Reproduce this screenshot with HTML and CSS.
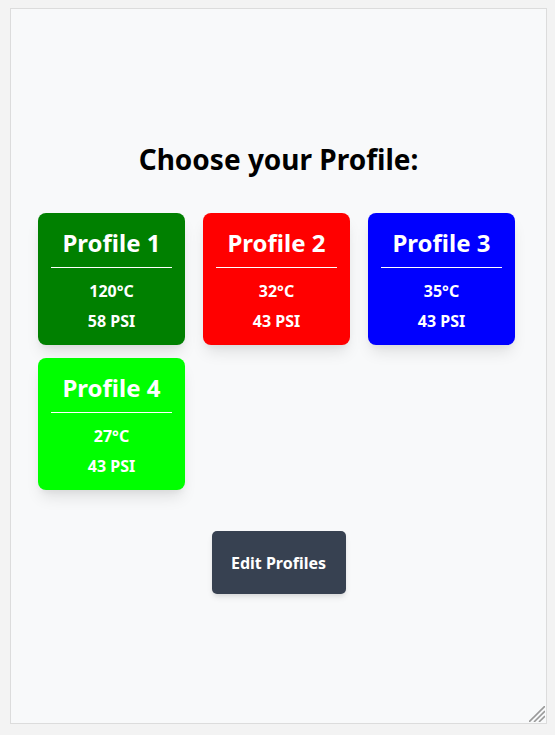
FILE: index.html
```html
<!DOCTYPE html>
<html>
<head>
<meta charset="utf-8">
<link rel="stylesheet" href="styles.css">
</head>
<body>
<div class="frame">
  <h1 class="title">Choose your Profile:</h1>
  <div class="grid">
    <div class="card green">
      <div class="name">Profile 1</div>
      <div class="val">120°C</div>
      <div class="val">58 PSI</div>
    </div>
    <div class="card red">
      <div class="name">Profile 2</div>
      <div class="val">32°C</div>
      <div class="val">43 PSI</div>
    </div>
    <div class="card blue">
      <div class="name">Profile 3</div>
      <div class="val">35°C</div>
      <div class="val">43 PSI</div>
    </div>
    <div class="card lime">
      <div class="name">Profile 4</div>
      <div class="val">27°C</div>
      <div class="val">43 PSI</div>
    </div>
  </div>
  <div class="actions">
    <button class="edit">Edit Profiles</button>
  </div>
  <svg class="grip" width="16" height="16" viewBox="0 0 16 16">
    <line x1="0" y1="16" x2="16" y2="0" />
    <line x1="5" y1="16" x2="16" y2="5" />
    <line x1="10" y1="16" x2="16" y2="10" />
  </svg>
</div>
</body>
</html>
```
FILE: styles.css
```css
html, body { margin: 0; padding: 0; }
body {
  background: #f3f3f3;
  font-family: "Noto Sans", "Open Sans", sans-serif;
  padding: 8px 8px 0 10px;
}
.frame {
  position: relative;
  box-sizing: border-box;
  width: 537px;
  height: 716px;
  border: 1px solid #dcdcdc;
  background: #f8f9fa;
  overflow: hidden;
  padding: 0 0 0 27px;
}
.grip {
  position: absolute;
  right: 1px;
  bottom: 1px;
}
.grip line {
  stroke: #9a9a9a;
  stroke-width: 1.6;
}
.title {
  margin: 134px 0 0 -27px;
  text-align: center;
  font-size: 28px;
  font-weight: 700;
  line-height: 32px;
  color: #000;
}
.grid {
  margin-top: 38px;
  display: grid;
  grid-template-columns: repeat(3, 147px);
  column-gap: 18px;
  row-gap: 13px;
}
.card {
  box-sizing: border-box;
  height: 132px;
  border-radius: 8px;
  color: #fff;
  text-align: center;
  padding: 13px 13px 0;
  box-shadow: 0 10px 15px -3px rgba(0,0,0,0.1), 0 4px 6px -2px rgba(0,0,0,0.05);
}
.green { background: #008000; }
.red { background: #ff0000; }
.blue { background: #0000ff; }
.lime { background: #00ff00; }
.name {
  font-size: 24px;
  font-weight: 700;
  line-height: 34px;
  padding-bottom: 7px;
  border-bottom: 1px solid #fff;
  margin-bottom: 8px;
}
.val {
  font-size: 16px;
  font-weight: 700;
  line-height: 30px;
}
.actions {
  display: flex;
  justify-content: center;
  margin: 41px 0 0 -27px;
}
.edit {
  width: 134px;
  height: 63px;
  border: none;
  border-radius: 5px;
  background: #374151;
  color: #fff;
  font-family: inherit;
  font-size: 16px;
  font-weight: 700;
  box-shadow: 0 4px 6px -1px rgba(0,0,0,0.1), 0 2px 4px -1px rgba(0,0,0,0.06);
}
```
